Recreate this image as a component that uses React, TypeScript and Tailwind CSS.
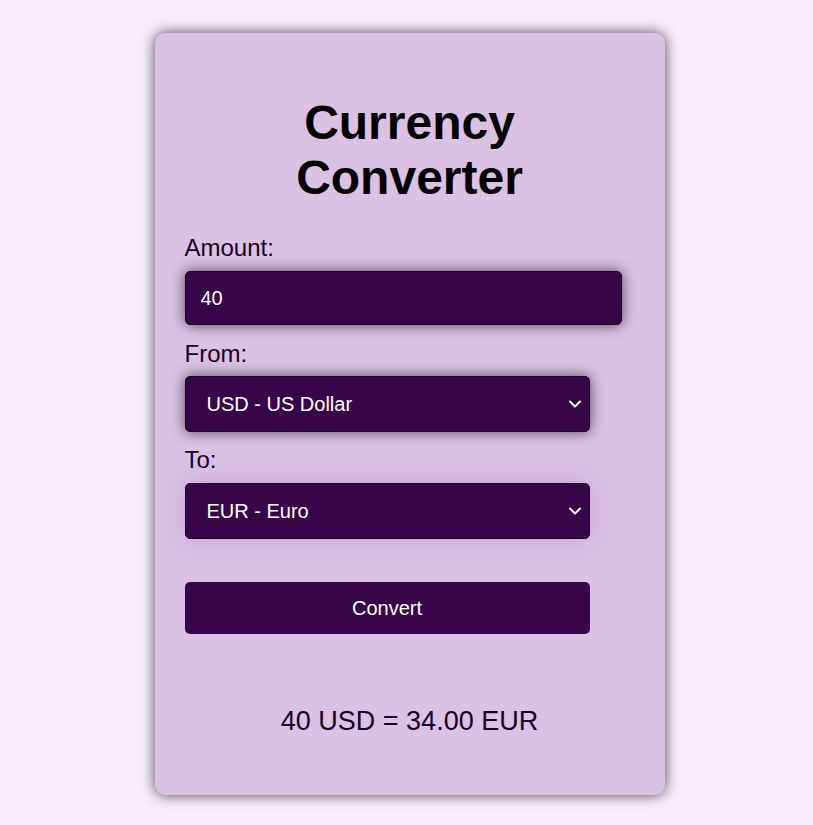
import { useState } from 'react';

const rates: Record<string, number> = { USD: 1, EUR: 0.85, GBP: 0.73, JPY: 110.0, INR: 74.5 };

const Chevron = () => (
  <svg
    className="pointer-events-none absolute right-[8px] top-1/2 -translate-y-1/2"
    width="14"
    height="10"
    viewBox="0 0 14 10"
    fill="none"
  >
    <path d="M2 2.5 L7 7.5 L12 2.5" stroke="white" strokeWidth="2" strokeLinecap="round" strokeLinejoin="round" />
  </svg>
);

const App = () => {
  const [amount, setAmount] = useState('40');
  const [from, setFrom] = useState('USD');
  const [to, setTo] = useState('EUR');
  const [result, setResult] = useState('40 USD = 34.00 EUR');

  const convert = () => {
    const value = (parseFloat(amount) / rates[from]) * rates[to];
    setResult(`${amount} ${from} = ${value.toFixed(2)} ${to}`);
  };

  return (
    <div className="min-h-screen bg-[#f9ecfd] flex justify-center pt-[33px] pl-[6px] font-['Liberation_Sans',Arial,sans-serif]">
      <div className="w-[510px] h-[762px] bg-[#dbc1e3] rounded-[10px] shadow-[0_0_14px_rgba(0,0,0,0.7)] px-[30px] pt-[62px]">
        <h1 className="text-[48px] leading-[55px] font-bold text-black text-center">Currency Converter</h1>

        <label className="block mt-[30px] text-[24px] leading-[25px] text-[#1a0022]">Amount:</label>
        <input
          type="number"
          value={amount}
          onChange={(e) => setAmount(e.target.value)}
          className="block mt-[11px] w-[437px] h-[54px] bg-[#36054a] text-white text-[20px] pl-[15px] border border-[#1e0229] rounded-[5px] shadow-[0_0_14px_rgba(0,0,0,0.65)] outline-none [appearance:textfield]"
        />

        <label className="block mt-[16px] text-[24px] leading-[25px] text-[#1a0022]">From:</label>
        <div className="relative mt-[10px] w-[405px]">
          <select
            value={from}
            onChange={(e) => setFrom(e.target.value)}
            className="block w-full h-[56px] appearance-none bg-[#36054a] text-white text-[20px] pl-[21px] border border-[#1e0229] rounded-[5px] shadow-[0_0_14px_rgba(0,0,0,0.65)] outline-none"
          >
            <option value="USD">USD - US Dollar</option>
            <option value="EUR">EUR - Euro</option>
            <option value="GBP">GBP - British Pound</option>
            <option value="JPY">JPY - Japanese Yen</option>
            <option value="INR">INR - Indian Rupee</option>
          </select>
          <Chevron />
        </div>

        <label className="block mt-[15px] text-[24px] leading-[25px] text-[#1a0022]">To:</label>
        <div className="relative mt-[11px] w-[405px]">
          <select
            value={to}
            onChange={(e) => setTo(e.target.value)}
            className="block w-full h-[56px] appearance-none bg-[#36054a] text-white text-[20px] pl-[21px] border border-[#1e0229] rounded-[5px] shadow-[0_0_24px_rgba(170,110,200,0.35)] outline-none"
          >
            <option value="USD">USD - US Dollar</option>
            <option value="EUR">EUR - Euro</option>
            <option value="GBP">GBP - British Pound</option>
            <option value="JPY">JPY - Japanese Yen</option>
            <option value="INR">INR - Indian Rupee</option>
          </select>
          <Chevron />
        </div>

        <button
          onClick={convert}
          className="block mt-[43px] w-[405px] h-[52px] bg-[#36054a] text-white text-[20px] rounded-[5px]"
        >
          Convert
        </button>

        <p className="mt-[72px] text-center text-[27px] leading-[31px] text-[#1a0022]">{result}</p>
      </div>
    </div>
  );
};

export default App;
